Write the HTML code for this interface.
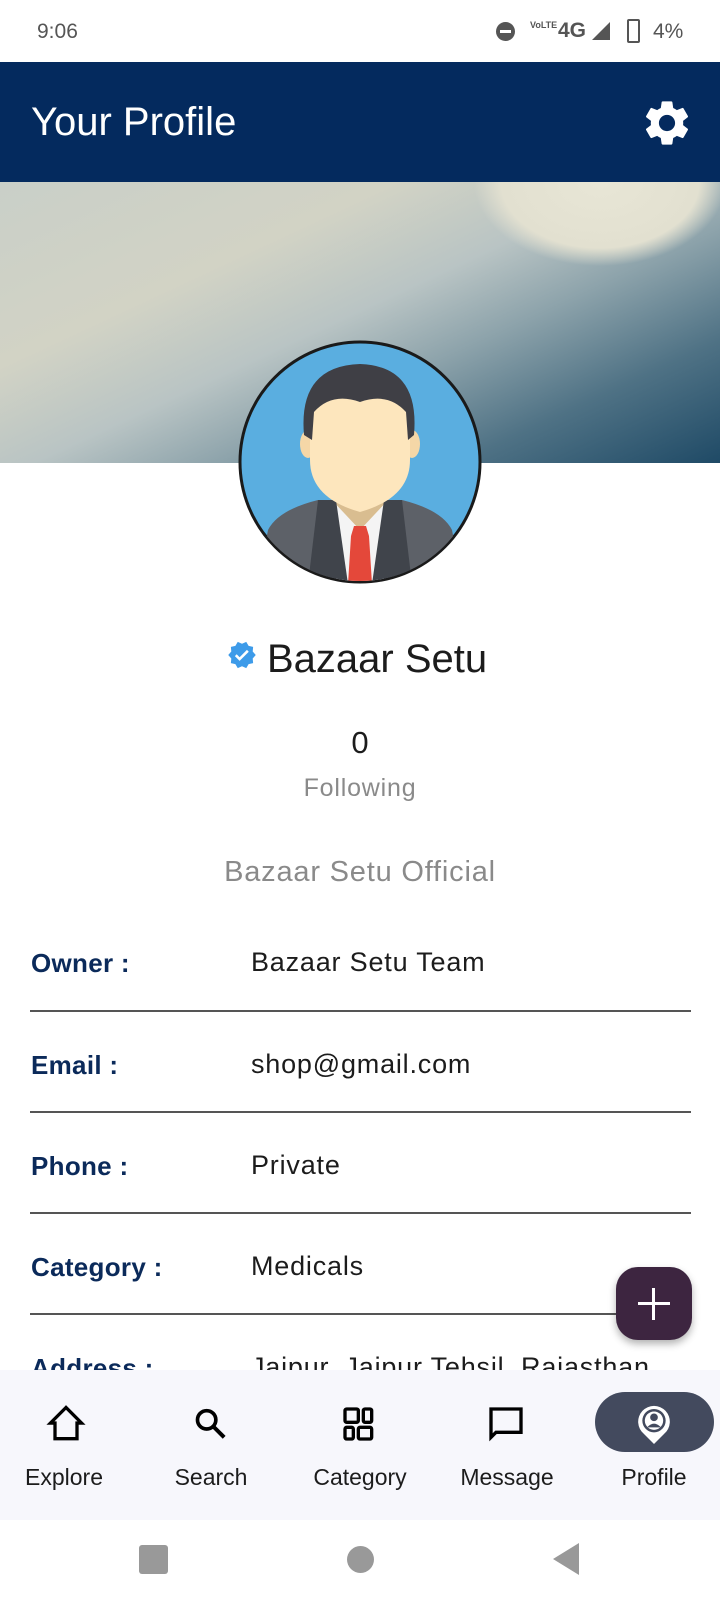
<!DOCTYPE html>
<html><head><meta charset="utf-8"><style>
*{margin:0;padding:0;box-sizing:border-box}
body{width:720px;height:1600px;position:relative;overflow:hidden;background:#fff;font-family:"Liberation Sans","DejaVu Sans",sans-serif;color:#1c1c1c}
.abs{position:absolute}
.status{top:0;left:0;width:720px;height:62px;background:#fff}
.appbar{top:62px;left:0;width:720px;height:120px;background:#042a5e}
.banner{top:182px;left:0;width:720px;height:281px;overflow:hidden;
background:radial-gradient(ellipse 180px 120px at 600px 0px,#e8e6d6 0,#e2e0d0 55%,rgba(0,0,0,0) 70%),
linear-gradient(155deg,#c9cfc8 0%,#d2d3c5 30%,#b9c4c4 48%,#8da3ab 62%,#4f7285 80%,#1f4a66 100%)}
.lbl{left:31px;font-size:26px;color:#0b2a5a;font-weight:bold;letter-spacing:0.3px}
.val{left:251px;font-size:27px;color:#1c1c1c;letter-spacing:0.8px}
.line{left:30px;width:661px;height:2px;background:#555}
.nav{top:1370px;left:0;width:720px;height:150px;background:#f7f7fc}
.nl{font-size:23px;color:#1c1c1c;width:144px;text-align:center;top:1464px}
</style></head><body>
<div class="abs status">
<div class="abs" style="left:37px;top:20px;font-size:21px;color:#555">9:06</div>
<div class="abs" style="left:496px;top:22px;width:19px;height:19px;border-radius:50%;background:#555"><div style="margin:8px 4px;height:3px;background:#fff"></div></div>
<div class="abs" style="left:530px;top:20px;font-size:9px;line-height:10px;color:#555;font-weight:bold">VoLTE</div>
<div class="abs" style="left:558px;top:19px;font-size:21px;color:#555;font-weight:bold">4G</div>
<svg class="abs" style="left:590px;top:20px" width="22" height="22"><polygon points="20,2 20,20 2,20" fill="#555"/></svg>
<div class="abs" style="left:627px;top:19px;width:13px;height:24px;border:2px solid #555;border-radius:2px"></div>
<div class="abs" style="left:653px;top:20px;font-size:21px;color:#555">4%</div>
</div>
<div class="abs appbar">
<div class="abs" style="left:31px;top:38px;font-size:40px;color:#fff">Your Profile</div>
<svg class="abs" style="left:640px;top:34px" width="54" height="54" viewBox="0 0 24 24"><path fill="#fff" d="M19.14 12.94c.04-.3.06-.61.06-.94 0-.32-.02-.64-.07-.94l2.03-1.58a.49.49 0 0 0 .12-.61l-1.92-3.32a.488.488 0 0 0-.59-.22l-2.39.96c-.5-.38-1.030-.7-1.62-.94l-.36-2.54a.484.484 0 0 0-.48-.41h-3.84c-.24 0-.43.17-.47.41l-.36 2.54c-.59.24-1.13.57-1.62.94l-2.39-.96c-.22-.08-.47 0-.59.22L2.74 8.87c-.12.21-.08.47.12.61l2.03 1.58c-.05.3-.09.63-.09.94s.02.64.07.94l-2.03 1.58a.49.49 0 0 0-.12.61l1.92 3.32c.12.22.37.29.59.22l2.39-.96c.5.38 1.03.7 1.62.94l.36 2.54c.05.24.24.41.48.41h3.840c.24 0 .44-.17.47-.41l.36-2.54c.59-.24 1.13-.56 1.62-.94l2.39.96c.22.08.47 0 .59-.22l1.92-3.32c.12-.22.07-.47-.12-.61l-2.01-1.58zM12 15.6c-1.98 0-3.6-1.62-3.6-3.6s1.62-3.6 3.6-3.6 3.6 1.62 3.6 3.6-1.62 3.6-3.6 3.6z"/></svg>
</div>
<div class="abs banner"></div>
<svg class="abs" style="left:238px;top:340px" width="244" height="244" viewBox="0 0 244 244">
<defs><clipPath id="c"><circle cx="122" cy="122" r="119"/></clipPath></defs>
<circle cx="122" cy="122" r="120" fill="#5aaee0" stroke="#1a1a1a" stroke-width="3"/>
<g clip-path="url(#c)">
<path d="M20 244 L30 190 Q40 170 80 160 L164 160 Q204 170 214 190 L224 244Z" fill="#5d6168"/>
<path d="M92 160 L152 160 L146 244 L98 244Z" fill="#f4f4f4"/>
<path d="M92 158 L122 190 L152 158" fill="#d9bd90"/>
<path d="M116 186 L128 186 L131 196 L134 244 L110 244 L113 196Z" fill="#e4483a"/>
<path d="M80 160 L98 160 L110 244 L70 244Z" fill="#40444b"/>
<path d="M164 160 L146 160 L134 244 L174 244Z" fill="#40444b"/>
<ellipse cx="70" cy="104" rx="8" ry="14" fill="#f5d7a7"/>
<ellipse cx="174" cy="104" rx="8" ry="14" fill="#f5d7a7"/>
<path d="M72 70 Q72 40 122 40 Q172 40 172 70 L172 120 Q172 158 122 172 Q72 158 72 120Z" fill="#fde6bd"/>
<path d="M66 95 Q60 26 122 24 Q182 26 176 95 L170 100 L168 72 Q150 52 122 62 Q94 52 76 72 L74 100Z" fill="#3f3f45"/>
</g></svg>
<svg class="abs" style="left:227px;top:640px" width="30" height="30" viewBox="0 0 24 24"><path fill="#3d9be9" d="M23 12l-2.44-2.78.34-3.68-3.61-.82-1.89-3.18L12 3 8.6 1.54 6.710 4.72l-3.61.81.34 3.68L1 12l2.44 2.78-.34 3.69 3.61.82 1.89 3.18L12 21l3.4 1.46 1.89-3.18 3.61-.82-.34-3.68L23 12zm-12.91 4.72l-3.8-3.81 1.48-1.48 2.32 2.33 5.85-5.87 1.48 1.48-7.33 7.35z"/></svg>
<div class="abs" style="left:267px;top:637px;font-size:40px;font-weight:500;color:#1c1c1c">Bazaar Setu</div>
<div class="abs" style="left:0;width:720px;text-align:center;top:725px;font-size:31px">0</div>
<div class="abs" style="left:0;width:720px;text-align:center;top:774px;font-size:25px;color:#8a8a8a;letter-spacing:0.8px">Following</div>
<div class="abs" style="left:0;width:720px;text-align:center;top:856px;font-size:29px;color:#8a8a8a;letter-spacing:0.8px">Bazaar Setu Official</div>
<div class="abs lbl" style="top:948px">Owner :</div><div class="abs val" style="top:947px">Bazaar Setu Team</div><div class="abs line" style="top:1010px"></div>
<div class="abs lbl" style="top:1050px">Email :</div><div class="abs val" style="top:1049px">shop@gmail.com</div><div class="abs line" style="top:1111px"></div>
<div class="abs lbl" style="top:1151px">Phone :</div><div class="abs val" style="top:1150px">Private</div><div class="abs line" style="top:1212px"></div>
<div class="abs lbl" style="top:1252px">Category :</div><div class="abs val" style="top:1251px">Medicals</div><div class="abs line" style="top:1313px"></div>
<div class="abs lbl" style="top:1353px">Address :</div><div class="abs val" style="top:1352px">Jaipur, Jaipur Tehsil, Rajasthan</div>
<div class="abs" style="left:616px;top:1267px;width:76px;height:73px;border-radius:22px;background:#3d2540;box-shadow:0 4px 8px rgba(0,0,0,.3)">
<div class="abs" style="left:22px;top:35px;width:32px;height:3px;background:#fff"></div><div class="abs" style="left:36px;top:21px;width:3px;height:32px;background:#fff"></div></div>
<div class="abs nav"></div>
<div class="abs" style="left:595px;top:1392px;width:119px;height:60px;border-radius:30px;background:#434a5e"></div>
<svg class="abs" style="left:44px;top:1402px" width="44" height="44" viewBox="0 0 24 24"><path d="M12 3 L3.5 11.5 L6 11.5 L6 20 L18 20 L18 11.5 L20.5 11.5Z" fill="none" stroke="#000" stroke-width="1.8" stroke-linejoin="miter"/></svg>
<svg class="abs" style="left:190px;top:1404px" width="40" height="40" viewBox="0 0 24 24"><circle cx="10" cy="9.5" r="5.5" fill="none" stroke="#000" stroke-width="2.2"/><path d="M14 13.5 L20.5 20" stroke="#000" stroke-width="2.4"/></svg>
<svg class="abs" style="left:340px;top:1404px" width="40" height="40" viewBox="0 0 24 24" fill="none" stroke="#000" stroke-width="2"><rect x="3" y="3" width="8" height="8" rx="1"/><rect x="14" y="3" width="5" height="8" rx="1"/><rect x="3" y="14" width="5" height="7" rx="1"/><rect x="11" y="14" width="8" height="7" rx="1"/></svg>
<svg class="abs" style="left:486px;top:1404px" width="40" height="40" viewBox="0 0 24 24"><path d="M3 3 H21 V17 H6 L3 20Z" fill="none" stroke="#000" stroke-width="2" stroke-linejoin="miter"/></svg>
<svg class="abs" style="left:634px;top:1402px" width="40" height="44" viewBox="0 0 24 26"><path d="M12 25 L6 19 A9.5 9.5 0 1 1 18 19Z" fill="#fff"/><circle cx="12" cy="11" r="7" fill="#434a5e"/><circle cx="12" cy="11" r="5.5" fill="#fff"/><circle cx="12" cy="9" r="2.3" fill="#434a5e"/><path d="M7.8 15 Q12 10.5 16.2 15" fill="#434a5e"/></svg>
<div class="abs nl" style="left:-8px">Explore</div>
<div class="abs nl" style="left:139px">Search</div>
<div class="abs nl" style="left:288px">Category</div>
<div class="abs nl" style="left:435px">Message</div>
<div class="abs nl" style="left:582px">Profile</div>
<div class="abs" style="left:139px;top:1545px;width:29px;height:29px;border-radius:3px;background:#999"></div>
<div class="abs" style="left:347px;top:1546px;width:27px;height:27px;border-radius:50%;background:#999"></div>
<svg class="abs" style="left:551px;top:1543px" width="30" height="34"><polygon points="28,0 28,32 2,16" fill="#999"/></svg>
</body></html>
